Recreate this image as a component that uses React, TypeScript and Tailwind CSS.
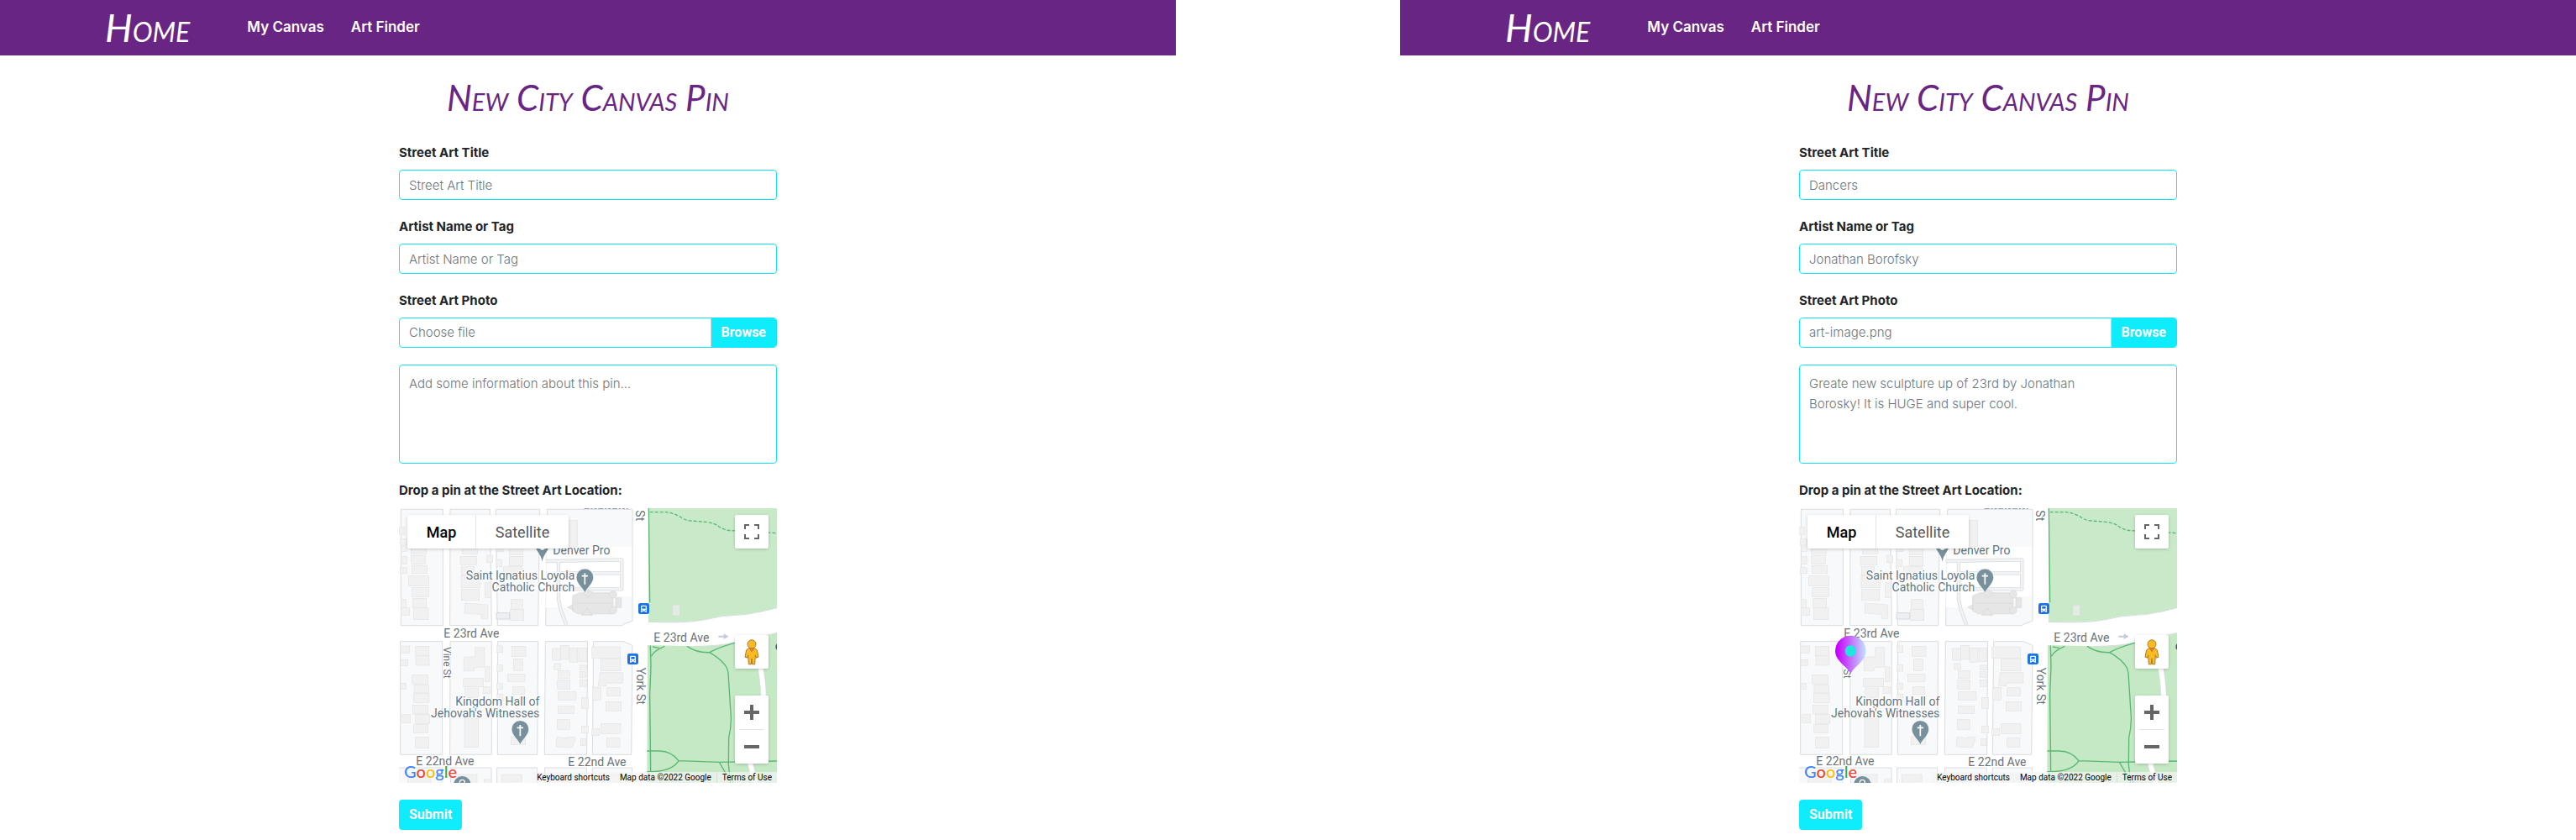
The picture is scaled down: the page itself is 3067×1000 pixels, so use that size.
import { useId, useRef } from "react";

type Screen = {
  title: string;
  artist: string;
  file: string;
  info: string;
  dropped: boolean;
};

const screens: Screen[] = [
  {
    title: "Street Art Title",
    artist: "Artist Name or Tag",
    file: "Choose file",
    info: "Add some information about this pin...",
    dropped: false,
  },
  {
    title: "Dancers",
    artist: "Jonathan Borofsky",
    file: "art-image.png",
    info: "Greate new sculpture up of 23rd by Jonathan\nBorosky! It is HUGE and super cool.",
    dropped: true,
  },
];

const handFont = "font-['Lato',sans-serif] font-normal italic [font-variant-caps:small-caps]";
const labelStyle = "block text-[15px] leading-8 font-bold text-[#212529]";
const fieldStyle =
  "block w-full rounded-[4px] border border-[#13e6f3] bg-white px-[11px] text-[15px] text-[#212529] placeholder:text-[#6c757d] placeholder:font-light outline-none";

const cityBlocks = [
  "M73 139H223V554H73Z",
  "M249 139H391L397 554H248Z",
  "M412 139H569L563 554H418Z",
  "M71 611H221V1015H71Z",
  "M249 611H397V1015H248Z",
  "M419 611H563L560 1015H418Z",
  "M589 611H740L737 1015H586Z",
  "M761 611H868L900 625L896 1015H757Z",
  "M50 1062H221V1130H50Z",
  "M251 1062H396V1130H251Z",
  "M416 1062H560V1130H416Z",
  "M587 1062H736V1130H587Z",
  "M757 1062H899V1130H757Z",
];

// x, y, width, height of each building footprint
const buildings: number[][] = [
  [67, 203, 18, 26], [70, 245, 24, 22], [74, 272, 20, 17], [74, 308, 20, 27], [70, 347, 24, 21],
  [110, 304, 50, 30], [112, 340, 55, 28], [101, 377, 72, 35], [113, 419, 59, 32], [116, 457, 48, 33],
  [118, 491, 53, 42], [73, 461, 18, 29], [73, 491, 31, 26], [110, 272, 53, 26],
  [292, 272, 54, 26], [285, 307, 58, 30], [289, 344, 46, 30], [288, 377, 67, 41], [289, 424, 64, 40],
  [379, 303, 22, 26], [374, 401, 20, 54], [412, 318, 21, 26], [412, 272, 26, 18],
  [461, 272, 48, 29], [460, 307, 49, 34], [440, 344, 66, 24], [466, 461, 42, 35], [463, 497, 49, 39],
  [672, 179, 32, 92], [1043, 480, 27, 39],
  [71, 627, 33, 26], [125, 628, 48, 34], [126, 662, 48, 34], [72, 676, 26, 21], [113, 731, 57, 32],
  [120, 767, 52, 28], [118, 796, 56, 33], [72, 760, 19, 21], [115, 838, 54, 32], [125, 872, 50, 32],
  [119, 907, 50, 30], [77, 872, 30, 29], [125, 952, 48, 40],
  [374, 701, 16, 54], [296, 743, 72, 30], [302, 777, 48, 36], [366, 773, 25, 24], [300, 885, 49, 103],
  [415, 627, 22, 23], [469, 628, 50, 36], [475, 673, 33, 42], [415, 695, 22, 22], [454, 727, 62, 27],
  [415, 761, 22, 20], [472, 773, 42, 27], [416, 799, 22, 26], [466, 951, 52, 29],
  [643, 625, 31, 50], [675, 634, 29, 51], [708, 634, 29, 49], [614, 636, 30, 42], [620, 690, 24, 21],
  [634, 716, 42, 26], [632, 749, 45, 32], [634, 791, 65, 29], [634, 842, 58, 26], [631, 890, 45, 35],
  [712, 696, 24, 16], [712, 719, 22, 20], [712, 748, 24, 24], [718, 812, 25, 38], [718, 914, 25, 24],
  [715, 958, 20, 25], [755, 630, 102, 40], [787, 672, 71, 44],
  [758, 775, 29, 45], [808, 776, 49, 29], [805, 826, 55, 33], [787, 904, 71, 36], [755, 922, 27, 25],
  [808, 955, 47, 33],
  [98, 1086, 82, 44], [270, 1086, 75, 44], [370, 1104, 26, 20], [608, 1086, 44, 44], [657, 1086, 62, 44],
  [790, 1086, 71, 44],
];

function PlacePin({ x, y }: { x: number; y: number }) {
  return (
    <g transform={`translate(${x} ${y})`}>
      <path
        d="M0 0C-3 -18 -31 -34 -31 -58A31 31 0 0 1 31 -58C31 -34 3 -18 0 0Z"
        fill="#78909c"
        stroke="#fff"
        strokeWidth="2"
      />
      <path d="M0 -73V-33M-11 -63H11" stroke="#fff" strokeWidth="5" fill="none" />
    </g>
  );
}

function BusStop({ x, y }: { x: number; y: number }) {
  return (
    <g transform={`translate(${x} ${y})`}>
      <rect width="39" height="39" rx="7" fill="#1a73e8" />
      <path d="M9 12a4 4 0 0 1 4-4h13a4 4 0 0 1 4 4v20h-5v-3h-11v3h-5Z" fill="#fff" />
      <path d="M13 12h13v8H13Z" fill="#1a73e8" />
      <circle cx="14" cy="25" r="2" fill="#1a73e8" />
      <circle cx="25" cy="25" r="2" fill="#1a73e8" />
    </g>
  );
}

function MapDrawing({ dropped }: { dropped: boolean }) {
  const gradient = useId();
  return (
    <svg
      viewBox="66 135 1350 981"
      preserveAspectRatio="xMidYMid slice"
      className="block h-full w-full"
      role="img"
      aria-label="Street map around E 23rd Ave and York St"
    >
      <rect x="66" y="135" width="1350" height="981" fill="#fff" />
      <g fill="#f8f9fa" stroke="#dadce0" strokeWidth="3">
        {cityBlocks.map((d) => (
          <path key={d} d={d} />
        ))}
        <path d="M596 139H900V538L870 548L862 554H590Z" />
      </g>
      <path d="M593 272H898V450H780V490H591Z" fill="#fff" />
      <g fill="none" stroke="#dadce0" strokeWidth="13" strokeLinejoin="round">
        <path d="M590 324L862 319V424H640M640 367H862M636 326V460L644 498L664 552" />
      </g>
      <g fill="none" stroke="#f1f3f4" strokeWidth="8" strokeLinejoin="round">
        <path d="M590 324L862 319V424H640M640 367H862M636 326V460L644 498L664 552" />
      </g>

      <g fill="#f1f1f1" stroke="#e4e4e4" strokeWidth="2">
        {buildings.map(([x, y, w, h]) => (
          <rect key={`${x}-${y}`} x={x} y={y} width={w} height={h} />
        ))}
        <path d="M302 474L383 480V530H361V514L300 510Z" />
        <path d="M338 632H371V702L335 704L333 716H298V667L338 665Z" />
        <path d="M784 722H866V760H806V770H778Z" />
        <path d="M630 952L667 957V953H695V966L684 990L627 987Z" />
        <path d="M433 1086H505V1112H470V1130H433Z" />
      </g>
      <path d="M414 509H461V531H414Z" fill="#eeeff3" stroke="#d4d8df" strokeWidth="3" />
      <g fill="#e6e6e6" stroke="#d8d8d8" strokeWidth="2">
        <path d="M686 448L712 437H830V512H706L686 502Z" />
        <path d="M725 437L740 424L760 437L740 455ZM718 517L738 492L758 517ZM668 489L686 480V497Z" />
        <path d="M840 455H860V490H840Z" />
        <circle cx="831" cy="443" r="13" />
        <circle cx="831" cy="499" r="13" />
        <path d="M700 475H830" />
      </g>

      <path d="M957 130H1420V490L1360 506L1310 513L1220 520L1150 534Q1080 545 957 541Z" fill="#c8eac9" />
      <path d="M957 541Q1080 547 1150 535L1220 521L1310 514L1416 491" fill="none" stroke="#dadce0" strokeWidth="3" />
      <path d="M954 624L1120 628Q1210 628 1260 615L1420 580V1120H952Z" fill="#c5e8c5" />
      <path d="M1120 628Q1210 628 1260 615L1416 580" fill="none" stroke="#dadce0" strokeWidth="3" />
      <path d="M1043 480H1070V519H1043Z" fill="#e3ece3" stroke="#d3dcd3" strokeWidth="2" />
      <path d="M1343 625C1355 690 1368 740 1368 810M1300 970L1340 1120" fill="none" stroke="#dadce0" strokeWidth="22" />
      <path d="M1343 625C1355 690 1368 740 1368 810M1300 970L1340 1120" fill="none" stroke="#fff" strokeWidth="17" />
      <g fill="none" stroke="#58b873" strokeWidth="4">
        <path d="M958 135L962 472M964 626L966 700L962 800L965 1077M968 664Q975 645 1015 628M972 630L995 634" />
        <path d="M1095 628Q1130 652 1175 650Q1205 633 1265 616M1175 650Q1220 675 1237 705Q1244 722 1243 740L1252 880Q1253 915 1244 955L1243 1050L1250 1116" />
        <path d="M952 1002H995Q1040 1003 1065 1037Q1040 1078 952 1076M1065 1037L1210 1042L1416 1038M1210 1042L1235 1085L1262 1116" />
        <path
          d="M962 149H1020Q1045 152 1070 165Q1085 178 1110 180L1160 184Q1190 187 1205 198Q1225 213 1250 215L1350 219L1416 224"
          strokeDasharray="12 6"
        />
      </g>
      <circle cx="1427" cy="630" r="16" fill="#455a64" />

      <path d="M552 270H603C597 292 582 300 578 326C574 300 558 292 552 270Z" fill="#78909c" />
      <path d="M570 278q8 8 16 0" stroke="#fff" strokeWidth="5" fill="none" />
      <PlacePin x={730} y={440} />
      <PlacePin x={499} y={982} />
      <circle cx="292" cy="1123" r="31" fill="#78909c" />
      <circle cx="292" cy="1114" r="9" fill="none" stroke="#fff" strokeWidth="4" />
      <BusStop x={921} y={474} />
      <BusStop x={882} y={654} />
      <path d="M1207 590H1226V583L1244 593L1226 603V596H1207Z" fill="#c5c9dd" />

      <g
        className="font-['Roboto',sans-serif]"
        fontSize="42"
        fill="#5f7480"
        stroke="#fff"
        strokeWidth="7"
        strokeLinejoin="round"
        paintOrder="stroke"
      >
        <text x="616" y="300">Denver Pro</text>
        <text x="694" y="391" textAnchor="end">Saint Ignatius Loyola</text>
        <text x="694" y="432" textAnchor="end">Catholic Church</text>
        <text x="568" y="840" textAnchor="end">Kingdom Hall of</text>
        <text x="568" y="882" textAnchor="end">Jehovah's Witnesses</text>
        <g fill="#6b7378">
          <text x="226" y="596">E 23rd Ave</text>
          <text x="976" y="612">E 23rd Ave</text>
          <text x="127" y="1054">E 22nd Ave</text>
          <text x="670" y="1056">E 22nd Ave</text>
          <text transform="translate(915 704) rotate(90)">York St</text>
          <text transform="translate(913 142) rotate(90)">St</text>
          <text transform="translate(224 630) rotate(90)" fontSize="36">Vine St</text>
        </g>
      </g>
      <path d="M728 136H884" stroke="#98a2a8" strokeWidth="4" strokeDasharray="18 5 7 5 10 5" />

      {dropped && (
        <g>
          <defs>
            <linearGradient id={gradient} x1="0" x2="1" y1="0" y2="0">
              <stop offset="0.05" stopColor="#c800ff" />
              <stop offset="1" stopColor="#c2e4ff" />
            </linearGradient>
          </defs>
          <path
            d="M250 727C243 704 195 682 195 645A55 55 0 0 1 305 645C305 682 257 704 250 727Z"
            fill={`url(#${gradient})`}
          />
          <circle cx="250" cy="645" r="20" fill="#1ee6dc" />
        </g>
      )}
    </svg>
  );
}

function StreetMap({ dropped }: { dropped: boolean }) {
  const control = "flex w-10 items-center justify-center rounded-[2px] bg-white shadow-[0_1px_4px_-1px_rgba(0,0,0,0.3)]";
  return (
    <div className="relative h-[327px] w-full overflow-hidden font-['Roboto',sans-serif]">
      <MapDrawing dropped={dropped} />

      <div className="absolute top-2 left-2.5 flex h-10 rounded-[2px] bg-white text-[18px] shadow-[0_1px_4px_-1px_rgba(0,0,0,0.3)]">
        <button type="button" className="w-[82px] border-r border-[#e6e6e6] font-medium text-black">
          Map
        </button>
        <button type="button" className="w-[110px] text-[#565656]">
          Satellite
        </button>
      </div>

      <button type="button" aria-label="Toggle fullscreen view" className={`${control} absolute top-2 right-2.5 h-10`}>
        <svg viewBox="0 0 18 18" className="h-[18px] w-[18px]" fill="#666">
          <path d="M0 0v6h2V2h4V0H0zm16 0h-4v2h4v4h2V0h-2zm0 16h-4v2h6v-6h-2v4zM2 12H0v6h6v-2H2v-4z" />
        </svg>
      </button>

      <div className="absolute top-[151px] right-2.5 flex flex-col gap-8">
        <button type="button" aria-label="Street View" className={`${control} h-10`}>
          <svg viewBox="0 0 54 92" className="h-[31px] w-[18px]">
            <path
              d="M17 31Q27 26 37 31L46 38L51 63L43 66L40 56L38 89H29L27 68L25 89H16L14 56L11 66L3 63L8 38Z"
              fill="#fbbc21"
              stroke="#a97b2f"
              strokeWidth="3"
            />
            <path d="M17 32H37L27 46Z" fill="#e8762c" />
            <circle cx="27" cy="17" r="15" fill="#fbbc21" stroke="#a97b2f" strokeWidth="3" />
          </svg>
        </button>
        <div className={`${control} flex-col`}>
          <button type="button" aria-label="Zoom in" className="flex h-10 w-10 items-center justify-center">
            <svg viewBox="0 0 18 18" className="h-[18px] w-[18px]" fill="#666">
              <path d="M18 7h-7V0H7v7H0v4h7v7h4v-7h7z" />
            </svg>
          </button>
          <span className="h-px w-[30px] bg-[#e6e6e6]" />
          <button type="button" aria-label="Zoom out" className="flex h-10 w-10 items-center justify-center">
            <svg viewBox="0 0 18 18" className="h-[18px] w-[18px]" fill="#666">
              <path d="M0 7h18v4H0V7z" />
            </svg>
          </button>
        </div>
      </div>

      <a
        href="#google"
        className="absolute bottom-0.5 left-1.5 font-['Lato',sans-serif] text-[20px] leading-6 font-medium [text-shadow:0_0_2px_#fff,0_0_2px_#fff]"
      >
        <span className="text-[#4285f4]">G</span>
        <span className="text-[#ea4335]">o</span>
        <span className="text-[#fbbc05]">o</span>
        <span className="text-[#4285f4]">g</span>
        <span className="text-[#34a853]">l</span>
        <span className="text-[#ea4335]">e</span>
      </a>

      <div className="absolute right-0 bottom-0 flex bg-[#f5f5f5]/70 text-[10px] leading-[13px] text-black">
        <button type="button" className="px-1.5">Keyboard shortcuts</button>
        <span className="px-1.5">Map data ©2022 Google</span>
        <a href="#terms" className="border-l border-[#d5e0d5] px-1.5">Terms of Use</a>
      </div>
    </div>
  );
}

function PinScreen({ title, artist, file, info, dropped }: Screen) {
  const id = useId();
  const picker = useRef<HTMLInputElement>(null);
  return (
    <section>
      <nav className="bg-[#682583] text-white">
        <div className="mx-auto flex h-[66px] max-w-[1150px] items-center">
          <a href="#home" className={`${handFont} mr-[68px] text-[46px] leading-none`}>
            Home
          </a>
          <div className="flex gap-8 text-[17px] font-semibold">
            <a href="#canvas">My Canvas</a>
            <a href="#finder">Art Finder</a>
          </div>
        </div>
      </nav>

      <form className="mx-auto w-full max-w-[450px] pt-6 pb-2" onSubmit={(e) => e.preventDefault()}>
        <h1 className={`${handFont} mb-6 text-center text-[42px] leading-[52px] whitespace-nowrap text-[#682583]`}>
          New City Canvas Pin
        </h1>

        <div className="mb-4">
          <label htmlFor={`${id}-title`} className={labelStyle}>Street Art Title</label>
          <input id={`${id}-title`} type="text" placeholder={title} className={`${fieldStyle} mt-1 h-9`} />
        </div>

        <div className="mb-4">
          <label htmlFor={`${id}-artist`} className={labelStyle}>Artist Name or Tag</label>
          <input id={`${id}-artist`} type="text" placeholder={artist} className={`${fieldStyle} mt-1 h-9`} />
        </div>

        <div className="mb-5">
          <label htmlFor={`${id}-photo`} className={labelStyle}>Street Art Photo</label>
          <div className="mt-1 flex h-9 overflow-hidden rounded-[4px] border border-[#13e6f3] text-[15px]">
            <label htmlFor={`${id}-photo`} className="flex flex-1 items-center px-[11px] font-light text-[#6c757d]">
              {file}
            </label>
            <input ref={picker} id={`${id}-photo`} type="file" className="hidden" />
            <button
              type="button"
              onClick={() => picker.current?.click()}
              className="border-l border-[#ced4da] bg-[#0fecfb] px-3 font-['Roboto',sans-serif] text-[16px] leading-none font-bold text-white"
            >
              Browse
            </button>
          </div>
        </div>

        <textarea
          aria-label="Information about this pin"
          placeholder={info}
          className={`${fieldStyle} h-[118px] resize-none py-2.5 leading-6`}
        />

        <p className={`${labelStyle} mt-4 mb-[5px]`}>Drop a pin at the Street Art Location:</p>
        <StreetMap dropped={dropped} />

        <button
          type="submit"
          className="mt-5 block h-9 rounded-[4px] bg-[#0fecfb] px-3 font-['Roboto',sans-serif] text-[16px] font-bold text-white"
        >
          Submit
        </button>
      </form>
    </section>
  );
}

export default function App() {
  return (
    <main className="grid min-h-screen grid-cols-2 gap-[267px] bg-white font-['Inter',sans-serif]">
      {screens.map((screen) => (
        <PinScreen key={screen.title} {...screen} />
      ))}
    </main>
  );
}
